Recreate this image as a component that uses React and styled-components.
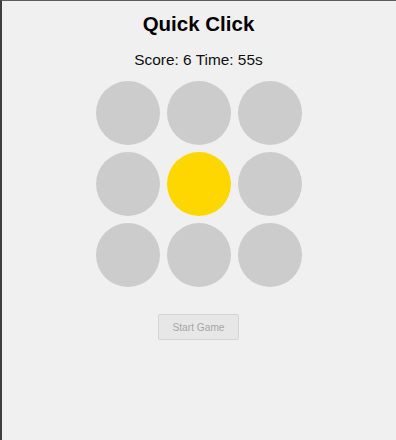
import React from 'react'
import styled, { createGlobalStyle } from 'styled-components'

const GlobalStyle = createGlobalStyle`
  html, body {
    margin: 0;
    padding: 0;
    background: #f0f0f0;
  }
  body {
    font-family: "Liberation Sans", Arial, sans-serif;
  }
`

const Page = styled.div`
  box-sizing: border-box;
  min-height: 100vh;
  border-top: 1px solid #5c5c5c;
  border-left: 2px solid #3e3e3e;
  display: flex;
  flex-direction: column;
  align-items: center;
  padding: 11px 1px 0 0;
`

const Title = styled.h1`
  margin: 0;
  font-size: 20.5px;
  line-height: 24px;
  font-weight: bold;
  color: #000;
`

const Status = styled.p`
  margin: 15px 0 0;
  font-size: 15.4px;
  line-height: 18px;
  color: #111;
`

const Board = styled.div`
  margin-top: 12px;
  display: grid;
  grid-template-columns: repeat(3, 64px);
  grid-auto-rows: 64px;
  gap: 7px;
`

const Hole = styled.div`
  border-radius: 50%;
  background: ${p => (p.$active ? '#ffd700' : '#cccccc')};
  cursor: pointer;
`

const StartButton = styled.button`
  margin-top: 27px;
  width: 81px;
  height: 26px;
  padding: 0;
  font-family: "Liberation Sans", Arial, sans-serif;
  font-size: 10.2px;
  color: #a6a6a6;
  background: #e7e7e7;
  border: 1px solid #d5d5d5;
  border-radius: 2px;
`

const holes = [0, 1, 2, 3, 4, 5, 6, 7, 8]

const App = () => (
  <Page>
    <GlobalStyle />
    <Title>Quick Click</Title>
    <Status>Score: 6 Time: 55s</Status>
    <Board>
      {holes.map(i => (
        <Hole key={i} $active={i === 4} />
      ))}
    </Board>
    <StartButton disabled>Start Game</StartButton>
  </Page>
)

export default App
